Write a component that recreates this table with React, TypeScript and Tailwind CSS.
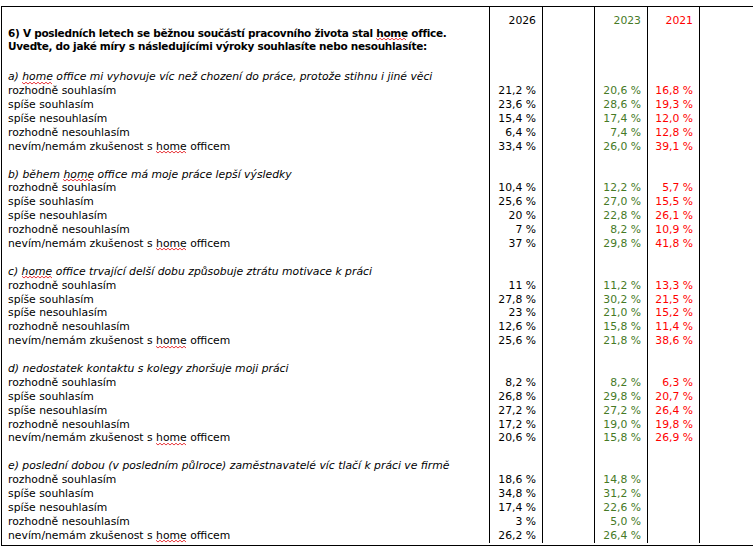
import React from "react";

type Sec = {
  label: string;
  parts: { t: string; u?: boolean }[];
  y26: string[];
  y23: string[];
  y21: string[];
};

const rows = [
  "rozhodně souhlasím",
  "spíše souhlasím",
  "spíše nesouhlasím",
  "rozhodně nesouhlasím",
];

const sections: Sec[] = [
  {
    label: "a) ",
    parts: [
      { t: "home", u: true },
      { t: " office mi vyhovuje víc než chození do práce, protože stihnu i jiné věci" },
    ],
    y26: ["21,2 %", "23,6 %", "15,4 %", "6,4 %", "33,4 %"],
    y23: ["20,6 %", "28,6 %", "17,4 %", "7,4 %", "26,0 %"],
    y21: ["16,8 %", "19,3 %", "12,0 %", "12,8 %", "39,1 %"],
  },
  {
    label: "b) ",
    parts: [
      { t: "během " },
      { t: "home", u: true },
      { t: " office má moje práce lepší výsledky" },
    ],
    y26: ["10,4 %", "25,6 %", "20 %", "7 %", "37 %"],
    y23: ["12,2 %", "27,0 %", "22,8 %", "8,2 %", "29,8 %"],
    y21: ["5,7 %", "15,5 %", "26,1 %", "10,9 %", "41,8 %"],
  },
  {
    label: "c) ",
    parts: [
      { t: "home", u: true },
      { t: " office trvající delší dobu způsobuje ztrátu motivace k práci" },
    ],
    y26: ["11 %", "27,8 %", "23 %", "12,6 %", "25,6 %"],
    y23: ["11,2 %", "30,2 %", "21,0 %", "15,8 %", "21,8 %"],
    y21: ["13,3 %", "21,5 %", "15,2 %", "11,4 %", "38,6 %"],
  },
  {
    label: "d) ",
    parts: [{ t: "nedostatek kontaktu s kolegy zhoršuje moji práci" }],
    y26: ["8,2 %", "26,8 %", "27,2 %", "17,2 %", "20,6 %"],
    y23: ["8,2 %", "29,8 %", "27,2 %", "19,0 %", "15,8 %"],
    y21: ["6,3 %", "20,7 %", "26,4 %", "19,8 %", "26,9 %"],
  },
  {
    label: "e) ",
    parts: [
      {
        t: "poslední dobou (v posledním půlroce) zaměstnavatelé víc tlačí k práci ve firmě",
      },
    ],
    y26: ["18,6 %", "34,8 %", "17,4 %", "3 %", "26,2 %"],
    y23: ["14,8 %", "31,2 %", "22,6 %", "5,0 %", "26,4 %"],
    y21: ["", "", "", "", ""],
  },
];

const Home = () => (
  <span className="relative">
    home
    <svg
      className="absolute left-0 top-[calc(100%-2.5px)] pointer-events-none"
      width="30"
      height="4"
      viewBox="0 0 30 4"
      fill="none"
    >
      <path
        d="M0 1.2 L2 3 L4 1.2 L6 3 L8 1.2 L10 3 L12 1.2 L14 3 L16 1.2 L18 3 L20 1.2 L22 3 L24 1.2 L26 3 L28 1.2 L30 3"
        stroke="#e5252a"
        strokeWidth="0.9"
      />
    </svg>
  </span>
);

const Line = ({ children, className = "" }: { children?: React.ReactNode; className?: string }) => (
  <div className={`h-[13.9px] leading-[13.9px] whitespace-nowrap ${className}`}>{children}</div>
);

const HeadLine = ({ children, className = "" }: { children?: React.ReactNode; className?: string }) => (
  <div className={`h-[13px] leading-[13px] whitespace-nowrap ${className}`}>{children}</div>
);

function NumCol({ year, color, vals }: { year: string; color: string; vals: string[][] }) {
  return (
    <div className={`flex flex-col border-l border-black text-right pr-[6px] ${color}`}>
      <div className="pt-[7.3px]">
        <HeadLine>{year}</HeadLine>
        <HeadLine />
        <HeadLine />
      </div>
      <div className="h-[17px]" />
      {vals.map((v, i) => (
        <div key={i}>
          <Line />
          {v.map((x, j) => (
            <Line key={j}>{x}</Line>
          ))}
          {i < vals.length - 1 && <Line />}
        </div>
      ))}
    </div>
  );
}

export default function App() {
  return (
    <div className="w-[753px] h-[551px] overflow-hidden bg-white text-black text-[10.8px] [font-family:'DejaVu_Sans',sans-serif]">
      <div className="ml-[1px] mt-[6px] w-[800px] border border-black pb-[2.1px] flex">
        <div className="w-[487px] pl-[6px] flex flex-col">
          <div className="pt-[7.3px]">
            <HeadLine />
            <HeadLine className="font-bold text-[10.5px] tracking-[-0.28px]">
              6) V posledních letech se běžnou součástí pracovního života stal <Home /> office.
            </HeadLine>
            <HeadLine className="font-bold text-[10.5px] tracking-[-0.28px]">
              Uveďte, do jaké míry s následujícími výroky souhlasíte nebo nesouhlasíte:
            </HeadLine>
          </div>
          <div className="h-[17px]" />
          {sections.map((s, i) => (
            <div key={i}>
              <Line className="italic">
                {s.label}
                {s.parts.map((p, k) =>
                  p.u ? <Home key={k} /> : <React.Fragment key={k}>{p.t}</React.Fragment>
                )}
              </Line>
              {rows.map((r) => (
                <Line key={r}>{r}</Line>
              ))}
              <Line>
                nevím/nemám zkušenost s <Home /> officem
              </Line>
              {i < sections.length - 1 && <Line />}
            </div>
          ))}
        </div>
        <div className="w-[53px]">
          <NumCol year="2026" color="text-black" vals={sections.map((s) => s.y26)} />
        </div>
        <div className="w-[52px] border-l border-black" />
        <div className="w-[53px]">
          <NumCol year="2023" color="text-[#467a26]" vals={sections.map((s) => s.y23)} />
        </div>
        <div className="w-[52px]">
          <NumCol year="2021" color="text-[#ff0000]" vals={sections.map((s) => s.y21)} />
        </div>
        <div className="flex-1 border-l border-black" />
      </div>
    </div>
  );
}
